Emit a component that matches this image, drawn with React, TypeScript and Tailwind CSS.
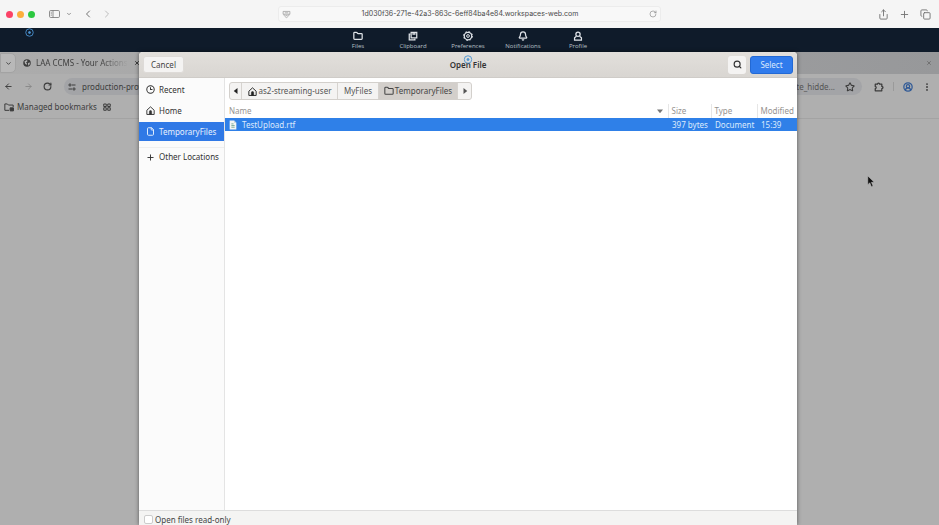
import React from 'react';
import {
  ArrowLeft,
  ArrowRight,
  Bell,
  ChevronDown,
  ChevronLeft,
  ChevronRight,
  CircleUserRound,
  Copy,
  EllipsisVertical,
  File,
  Folder,
  Plus,
  RotateCw,
  Search,
  Share,
  Star,
  X,
} from 'lucide-react';

interface IconProps {
  className?: string;
}

const HomeIcon = ({ className }: IconProps) => (
  <svg viewBox="0 0 16 16" className={className} fill="none" stroke="currentColor" strokeWidth="1.7" strokeLinejoin="round">
    <path d="M1.5 15V7.5L8 1.5l6.500 6V15z" />
    <path d="M6 14.500V10a2 2 0 0 1 4 0v4.500z" fill="currentColor" strokeWidth="1" />
  </svg>
);

const RecentIcon = ({ className }: IconProps) => (
  <svg viewBox="0 0 16 16" className={className} fill="none" stroke="currentColor" strokeWidth="1.8">
    <circle cx="8" cy="8" r="6.6" />
    <path d="M8 4v4h3.5" />
  </svg>
);

const GlobeIcon = ({ className }: IconProps) => (
  <svg viewBox="0 0 16 16" className={className}>
    <circle cx="8" cy="8" r="7.5" fill="currentColor" />
    <path d="M3 4.500 8 2l1 2.500L6 7l2 2-1 3-3-3zM10 8l4-1-1 4-2.500 2.500z" fill="#b4b4b4" />
  </svg>
);

const PuzzleIcon = ({ className }: IconProps) => (
  <svg viewBox="0 0 16 16" className={className} fill="none" stroke="currentColor" strokeWidth="2" strokeLinejoin="round">
    <path d="M2 3.500h3.500c0-2.500 3.500-2.500 3.500 0h3.500V7c2.500 0 2.500 3.500 0 3.500V14H2v-3.500c2 0 2-3.500 0-3.500z" />
  </svg>
);

const ClipboardIcon = ({ className }: IconProps) => (
  <svg viewBox="0 0 16 16" className={className} fill="none" stroke="currentColor" strokeWidth="2">
    <path d="M5 2h9v9H5z" />
    <path d="M4 5H2v9h9v-2" />
    <path d="M8 2v3h3V2" />
  </svg>
);

const GearIcon = ({ className }: IconProps) => (
  <svg viewBox="0 0 16 16" className={className} fill="none" stroke="currentColor">
    <circle cx="8" cy="8" r="6" strokeWidth="2" />
    <circle cx="8" cy="8" r="7.2" strokeWidth="1.4" strokeDasharray="2.8 2.85" />
    <circle cx="8" cy="8" r="2.2" strokeWidth="1.6" />
  </svg>
);

const ProfileIcon = ({ className }: IconProps) => (
  <svg viewBox="0 0 16 16" className={className} fill="none" stroke="currentColor" strokeWidth="2">
    <circle cx="8" cy="5" r="3.4" />
    <path d="M5.5 8.5 2.5 11v3.5h11V11l-3-2.5" />
  </svg>
);

const SidebarIcon = ({ className }: IconProps) => (
  <svg viewBox="0 0 22 16" className={className} fill="none" stroke="currentColor" strokeWidth="1.6">
    <rect x="1" y="1" width="20" height="14" rx="2.5" />
    <path d="M8 1v14M3.5 4.5h2M3.5 7.5h2M3.5 10.5h2" />
  </svg>
);

const ShieldIcon = ({ className }: IconProps) => (
  <svg viewBox="0 0 16 16" className={className} fill="none" stroke="currentColor" strokeWidth="1.4">
    <path d="M2 2.5h12v5H2zM3.5 7.5c0 3 2 4.5 4.5 6 2.5-1.5 4.5-3 4.5-6M5 5h6M6 10h4" />
  </svg>
);

const TuneIcon = ({ className }: IconProps) => (
  <svg viewBox="0 0 16 16" className={className} fill="none" stroke="currentColor" strokeWidth="2">
    <path d="M8 4h7M1 12h7" />
    <circle cx="4" cy="4" r="2.2" />
    <circle cx="12" cy="12" r="2.2" />
  </svg>
);

const ManagedIcon = ({ className }: IconProps) => (
  <svg viewBox="0 0 18 16" className={className} fill="none" stroke="currentColor" strokeWidth="1.8">
    <path d="M9 14H1.5V2.5H6l2 2h8.5V8" />
    <path d="M11 9.5h6V15h-6z" fill="currentColor" />
  </svg>
);

const GridIcon = ({ className }: IconProps) => (
  <svg viewBox="0 0 16 16" className={className} fill="none" stroke="currentColor" strokeWidth="2">
    <path d="M1.5 2h5v5h-5zM9.5 2h5v5h-5zM1.5 9.5h5v5h-5zM9.5 9.5h5v5h-5z" />
  </svg>
);

const DocumentIcon = ({ className }: IconProps) => (
  <svg viewBox="0 0 14 18" className={className}>
    <path d="M1 1h8l4 4v12H1z" fill="#f3f6f4" />
    <path d="M9 1v4h4z" fill="#b9cbd8" />
    <path d="M4 7h4M4 10h6M4 13h6" stroke="#6ba08a" strokeWidth="1.5" />
  </svg>
);

const Triangle = ({ className }: IconProps) => (
  <svg viewBox="0 0 8 8" className={className} fill="currentColor">
    <path d="M2 0v8l5-4z" />
  </svg>
);

const HintDot = () => (
  <svg viewBox="0 0 18 18" className="size-[9px]" fill="none" stroke="#4b93d1" strokeWidth="1.8">
    <circle cx="9" cy="9" r="7.5" />
    <circle cx="9" cy="9" r="2" fill="#4b93d1" />
  </svg>
);

const portalItems = [
  { label: 'Files', icon: <Folder className="size-[10px]" strokeWidth={3} /> },
  { label: 'Clipboard', icon: <ClipboardIcon className="size-[10px]" /> },
  { label: 'Preferences', icon: <GearIcon className="size-[10px]" /> },
  { label: 'Notifications', icon: <Bell className="size-[10px]" strokeWidth={3} /> },
  { label: 'Profile', icon: <ProfileIcon className="size-[10px]" /> },
];

const places = [
  { label: 'Recent', icon: <RecentIcon className="size-[9px]" /> },
  { label: 'Home', icon: <HomeIcon className="size-[9px]" /> },
  { label: 'TemporaryFiles', icon: <File className="size-[9px]" strokeWidth={2.5} />, active: true },
];

const SafariBar = () => (
  <header className="grid h-7 shrink-0 grid-cols-[1fr_383px_1fr] items-center bg-[#f5f5f5] text-[#737373]">
    <div className="flex items-center pl-[6px]">
      <div className="flex gap-1">
        <span className="size-[7px] rounded-full bg-[#fb4267]" />
        <span className="size-[7px] rounded-full bg-[#fcae3c]" />
        <span className="size-[7px] rounded-full bg-[#2cc840]" />
      </div>
      <button aria-label="Sidebar" className="ml-[14px]"><SidebarIcon className="h-2 w-[11px]" /></button>
      <button aria-label="Tab groups" className="ml-[6px]"><ChevronDown className="size-[6px]" strokeWidth={3} /></button>
      <button aria-label="Back" className="ml-[10px]"><ChevronLeft className="size-3" /></button>
      <button aria-label="Forward" className="ml-[7px] text-[#bdbdbd]"><ChevronRight className="size-3" /></button>
    </div>
    <div className="flex h-4 items-center justify-between rounded-[3px] border border-[#ececec] bg-[#f8f8f8] px-[3px]">
      <ShieldIcon className="size-[9px] text-[#a0a0a0]" />
      <span className="font-['Inter',sans-serif] text-[7px] text-[#4a4a4a]">1d030f36-271e-42a3-863c-6eff84ba4e84.workspaces-web.com</span>
      <button aria-label="Reload page"><RotateCw className="size-2 text-[#8a8a8a]" /></button>
    </div>
    <div className="flex items-center justify-end gap-[10px] pr-2">
      <button aria-label="Share"><Share className="size-[11px]" /></button>
      <button aria-label="New tab"><Plus className="size-[11px]" /></button>
      <button aria-label="Tab overview"><Copy className="size-[11px]" /></button>
    </div>
  </header>
);

const PortalBar = () => (
  <nav className="relative flex h-6 shrink-0 justify-center bg-[#0f1b2a] pr-[3px] font-['Open_Sans',sans-serif] text-[#dfe3e8]">
    <div className="absolute left-[25px] top-0"><HintDot /></div>
    {portalItems.map(item => (
      <button key={item.label} className="flex w-[55px] flex-col items-center pt-[2px]">
        <span className="flex h-[11px] items-center">{item.icon}</span>
        <span className="text-[6px] leading-[10px] text-[#b9c0c8]">{item.label}</span>
      </button>
    ))}
  </nav>
);

const RemoteBrowser = () => (
  <div className="flex flex-1 flex-col bg-[#afafaf] text-[#3c3c3c]">
    <div className="flex h-[22px] items-center bg-linear-to-r from-[#acacac] to-[#97989a] pr-[7px]">
      <button aria-label="Search tabs" className="flex h-5 w-4 items-center justify-center rounded-r-[5px] border border-[#a3a3a3] bg-[#b8b8b8]">
        <ChevronDown className="size-[7px]" strokeWidth={3} />
      </button>
      <GlobeIcon className="ml-[7px] size-2" />
      <span className="ml-[5px] w-[92px] overflow-hidden bg-linear-to-r from-[#3c3c3c] from-70% to-transparent bg-clip-text whitespace-nowrap text-transparent">LAA CCMS - Your Actions</span>
      <X className="ml-[6px] size-[6px]" strokeWidth={4} />
      <button aria-label="Close" className="ml-auto"><X className="size-[6px] text-[#666666]" strokeWidth={3} /></button>
    </div>
    <div className="flex h-[25px] items-center pl-1 pr-[7px]">
      <button aria-label="Back"><ArrowLeft className="size-[9px]" strokeWidth={2.5} /></button>
      <button aria-label="Forward" className="ml-[11px] text-[#888888]"><ArrowRight className="size-[9px]" strokeWidth={2.5} /></button>
      <button aria-label="Reload" className="ml-[10px]"><RotateCw className="size-[9px]" strokeWidth={3} /></button>
      <div className="ml-3 flex h-[17px] flex-1 items-center rounded-full bg-[#a3a4a7] pl-1 pr-[7px]">
        <TuneIcon className="size-2" />
        <span className="ml-[6px]">production-prov</span>
        <span className="ml-auto text-[#555555]">ite_hidde...</span>
        <button aria-label="Bookmark" className="ml-[10px]"><Star className="size-[10px]" strokeWidth={2.5} /></button>
      </div>
      <button aria-label="Extensions" className="ml-3"><PuzzleIcon className="size-[10px]" /></button>
      <span className="ml-[9px] h-[9px] w-px bg-[#9a9a9a]" />
      <button aria-label="Account" className="ml-[9px] text-[#305a96]"><CircleUserRound className="size-[10px]" strokeWidth={3} /></button>
      <button aria-label="Menu" className="ml-[9px]"><EllipsisVertical className="size-[10px]" strokeWidth={2.5} /></button>
    </div>
    <div className="flex h-5 items-center border-b border-[#a3a3a3] pb-1 pl-1">
      <ManagedIcon className="size-[10px]" />
      <span className="ml-[3px] w-[77px] whitespace-nowrap">Managed bookmarks</span>
      <GridIcon className="ml-[9px] size-2" />
    </div>
  </div>
);

const PlacesSidebar = () => (
  <aside className="flex w-[86px] shrink-0 flex-col gap-[2px] border-r border-[#e4e4e4] bg-[#fbfbfb] pt-[2px] text-[#333333]">
    {places.map(place => (
      <button
        key={place.label}
        className={place.active
          ? 'flex h-[19px] items-center gap-1 bg-[#3079e6] pl-[7px] text-[#e8f1fd]'
          : 'flex h-[19px] items-center gap-1 pl-[7px]'}
      >
        {place.icon}
        {place.label}
      </button>
    ))}
    <button className="mt-1 flex h-[19px] items-center gap-1 whitespace-nowrap border-t border-[#efefef] pl-[7px]">
      <Plus className="size-[9px]" strokeWidth={2.5} />
      Other Locations
    </button>
  </aside>
);

const PathBar = () => (
  <div className="mx-1 mt-1 flex h-[18px] w-fit items-stretch divide-x divide-[#d6d3cf] overflow-hidden rounded-[3px] border border-[#d3d0cc] bg-[#f4f3f2] text-[#555555]">
    <button aria-label="Previous" className="flex w-3 items-center justify-center text-[#222222]"><Triangle className="size-[6px] rotate-180" /></button>
    <button className="flex w-[96px] items-center justify-center gap-[2px] whitespace-nowrap"><HomeIcon className="size-[9px] text-[#222222]" />as2-streaming-user</button>
    <button className="w-[41px]">MyFiles</button>
    <button className="flex w-[79px] items-center justify-center gap-px bg-[#d3cfcb] text-[#444444]"><Folder className="size-[10px]" strokeWidth={2.5} />TemporaryFiles</button>
    <button aria-label="Next" className="flex w-[13px] items-center justify-center"><Triangle className="size-[6px]" /></button>
  </div>
);

const FileTable = () => (
  <table className="mt-1 w-full table-fixed border-collapse text-left">
    <thead className="text-[#969390]">
      <tr className="h-[14px]">
        <th className="p-0 pl-1 font-normal leading-[12px]">
          <div className="flex items-center justify-between pr-[5px]">
            Name
            <Triangle className="size-[6px] rotate-90 text-[#777777]" />
          </div>
        </th>
        <th className="w-[43px] border-l border-[#e6e6e6] p-0 pl-[3px] font-normal leading-[12px]">Size</th>
        <th className="w-[46px] border-l border-[#e6e6e6] p-0 pl-[3px] font-normal leading-[12px]">Type</th>
        <th className="w-[40px] border-l border-[#e6e6e6] p-0 pl-[3px] font-normal leading-[12px]">Modified</th>
      </tr>
    </thead>
    <tbody>
      <tr className="h-[13px] bg-[#2f80e8] leading-[12px] text-[#dceafc]">
        <td className="p-0 pl-1">
          <div className="flex items-center gap-[5px]"><DocumentIcon className="h-[10px] w-2" />TestUpload.rtf</div>
        </td>
        <td className="whitespace-nowrap p-0 pl-1">397 bytes</td>
        <td className="p-0 pl-1">Document</td>
        <td className="p-0 pl-1">15:39</td>
      </tr>
    </tbody>
  </table>
);

const OpenFileDialog = () => (
  <section role="dialog" aria-label="Open File" className="absolute bottom-0 left-[139px] right-[142px] top-[52px] flex flex-col overflow-hidden rounded-t-[4px] bg-white shadow-[0_0_4px_rgba(0,0,0,0.5)]">
    <div className="grid h-[26px] shrink-0 grid-cols-[1fr_auto_1fr] items-center border-b border-[#cfccc8] bg-linear-to-b from-[#e2dfdb] to-[#d9d6d2] px-1">
      <button className="h-[17px] w-[41px] rounded-[3px] border border-[#dedbd8] bg-[#f4f3f2] text-[#444444]">Cancel</button>
      <div className="relative">
        <h1 className="font-semibold text-[#333333]">Open File</h1>
        <div className="absolute -top-1 left-1/2 -translate-x-1/2"><HintDot /></div>
      </div>
      <div className="flex justify-end gap-1">
        <button aria-label="Search" className="flex h-[18px] w-[18px] items-center justify-center rounded-[3px] bg-[#f4f3f2] text-[#333333]"><Search className="size-[9px]" strokeWidth={3} /></button>
        <button className="h-[18px] w-[43px] rounded-[3px] border border-[#2369d4] bg-[#307bec] text-[#dceafc]">Select</button>
      </div>
    </div>
    <div className="flex min-h-0 flex-1">
      <PlacesSidebar />
      <main className="min-w-0 flex-1">
        <PathBar />
        <FileTable />
      </main>
    </div>
    <footer className="flex h-[15px] shrink-0 items-center border-t border-[#dddddd] bg-[#f4f4f3] pl-[5px] pt-[3px] text-[#444444]">
      <label className="flex items-center gap-[2px]">
        <input type="checkbox" className="size-[9px] appearance-none rounded-[2px] border border-[#cccccc] bg-white" />
        Open files read-only
      </label>
    </footer>
  </section>
);

const App = () => (
  <div className="relative flex h-screen flex-col overflow-hidden font-['Noto_Sans',sans-serif] text-[8px] leading-[12px]">
    <SafariBar />
    <PortalBar />
    <RemoteBrowser />
    <OpenFileDialog />
    <svg viewBox="0 0 10 16" className="absolute left-[867px] top-[175px] h-[13px] w-2">
      <path d="M1 1v11l2.5-2.5 2 5 2-1-2-4.5H9z" fill="#111111" stroke="#c4c4c4" strokeWidth="0.6" />
    </svg>
  </div>
);

export default App;
